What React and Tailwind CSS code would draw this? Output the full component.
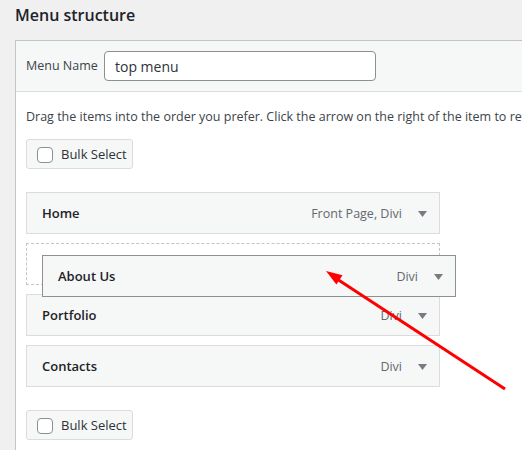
import React from "react";

const items = [
  { title: "Home", meta: "Front Page, Divi" },
  { title: "Portfolio", meta: "Divi" },
  { title: "Contacts", meta: "Divi" },
];

const Caret = () => (
  <svg width="9" height="6" viewBox="0 0 9 6" className="shrink-0">
    <path d="M0 0 H9 L4.5 6 Z" fill="#787c82" />
  </svg>
);

const MenuItem = ({ title, meta, className = "" }) => (
  <div
    className={`h-[42px] w-[414px] flex items-center justify-between bg-[#f6f7f7] border pl-[15px] pr-[12px] pt-[2px] ${className}`}
  >
    <span className="text-[13px] font-semibold text-[#1d2327]">{title}</span>
    <div className="flex items-center gap-[16px]">
      <span className="text-[12.5px] text-[#646970]">{meta}</span>
      <Caret />
    </div>
  </div>
);

const BulkSelect = () => (
  <label className="h-[30px] w-[107px] flex items-center gap-[8px] px-[10px] pt-[1px] bg-[#f6f7f7] border border-[#dcdcde] rounded-[3px]">
    <span className="w-[16px] h-[16px] border border-[#8c8f94] rounded-[4px] bg-white shrink-0" />
    <span className="text-[13px] text-[#2c3338]">Bulk Select</span>
  </label>
);

export default function App() {
  return (
    <div
      className="relative w-[522px] h-[450px] overflow-hidden bg-[#f0f0f1] whitespace-nowrap"
      style={{ fontFamily: '"Open Sans", "Noto Sans", sans-serif' }}
    >
      <h2 className="pt-[4px] px-[15px] mb-[14px] text-[16px] leading-[22px] font-semibold text-[#1d2327]">
        Menu structure
      </h2>

      <div className="ml-[15px] border border-r-0 border-[#c3c4c7] bg-white h-[420px]">
        {/* Menu name header */}
        <div className="flex items-center bg-[#f6f7f7] border-b border-[#dcdcde] pl-[10px] py-[10px]">
          <span className="w-[78px] text-[12.5px] text-[#3c434a]">Menu Name</span>
          <div className="w-[272px] h-[30px] flex items-center px-[10px] bg-white border border-[#8c8f94] rounded-[4px] text-[14px] text-[#2c3338]">
            top menu
          </div>
        </div>

        {/* Body */}
        <div className="pl-[10px] pt-[15px]">
          <p className="text-[12.5px] leading-[19px] text-[#3c434a]">
            Drag the items into the order you prefer. Click the arrow on the right of the item to reveal additional configuration options.
          </p>

          <div className="mt-[13px]">
            <BulkSelect />
          </div>

          <div className="relative mt-[23px] flex flex-col gap-[9px]">
            <MenuItem {...items[0]} className="border-[#dcdcde]" />
            <div className="h-[42px] w-[414px] border border-dashed border-[#c3c4c7]" />
            <MenuItem {...items[1]} className="border-[#dcdcde]" />
            <MenuItem {...items[2]} className="border-[#dcdcde]" />

            {/* item being dragged */}
            <MenuItem
              title="About Us"
              meta="Divi"
              className="absolute left-[16px] top-[63px] border-[#8c8f94]"
            />
          </div>

          <div className="mt-[23px]">
            <BulkSelect />
          </div>
        </div>
      </div>

      {/* annotation arrow */}
      <svg className="absolute inset-0 pointer-events-none" width="522" height="450">
        <line x1="505" y1="389" x2="337" y2="279" stroke="#ff0000" strokeWidth="3" />
        <polygon points="326,271 342.5,275.2 336.4,284.4" fill="#ff0000" />
      </svg>
    </div>
  );
}
